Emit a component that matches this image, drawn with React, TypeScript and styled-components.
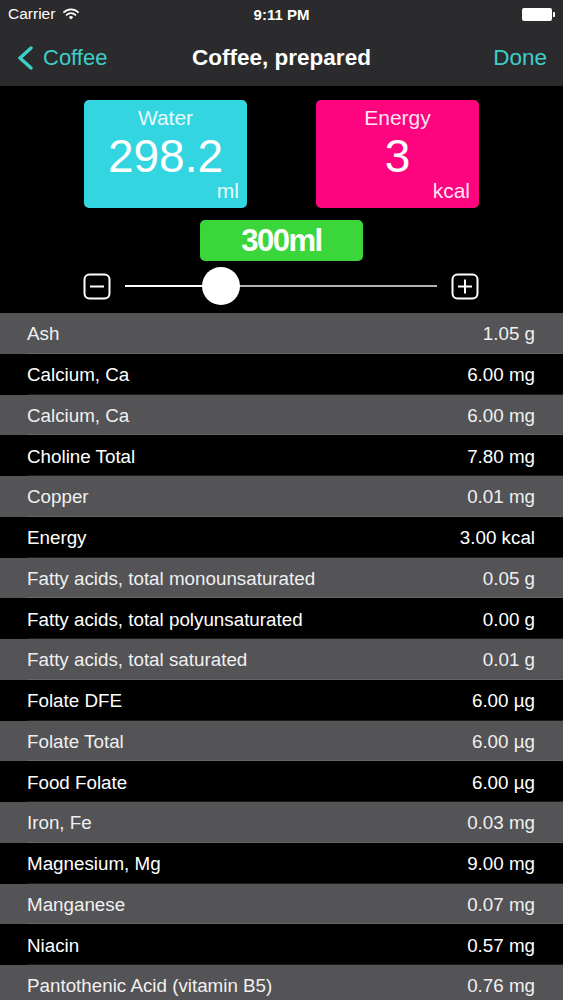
import React from "react";
import styled, { createGlobalStyle } from "styled-components";

const GlobalStyle = createGlobalStyle`
  html, body {
    margin: 0;
    padding: 0;
    background: #000;
  }
  body {
    font-family: "Liberation Sans", Arial, sans-serif;
    color: #fff;
  }
`;

const Screen = styled.div`
  width: 563px;
  height: 1000px;
  overflow: hidden;
  background: #000;
`;

const Header = styled.header`
  background: #2b2a2c;
  height: 86px;
  display: flex;
  flex-direction: column;
`;

const StatusBar = styled.div`
  height: 28px;
  display: grid;
  grid-template-columns: 1fr auto 1fr;
  align-items: center;
  padding: 0 8px;
  font-size: 15.5px;
`;

const Carrier = styled.div`
  display: flex;
  align-items: center;
  gap: 8px;
`;

const Time = styled.div`
  font-weight: bold;
  font-size: 15px;
`;

const Battery = styled.div`
  justify-self: end;
  display: flex;
  align-items: center;
`;

const BatteryBody = styled.div`
  width: 30px;
  height: 13px;
  background: #fff;
  border-radius: 2px;
`;

const BatteryNub = styled.div`
  width: 2px;
  height: 5px;
  margin-left: 1px;
  background: #fff;
  border-radius: 0 1px 1px 0;
`;

const NavBar = styled.nav`
  flex: 1;
  display: grid;
  grid-template-columns: 1fr auto 1fr;
  align-items: center;
  padding: 2px 16px 0 16px;
`;

const BackButton = styled.div`
  display: flex;
  align-items: center;
  gap: 9px;
  color: #3ccfc8;
  font-size: 22px;
`;

const Title = styled.div`
  font-size: 22.5px;
  font-weight: bold;
`;

const DoneButton = styled.div`
  justify-self: end;
  color: #3ccfc8;
  font-size: 22.5px;
`;

const Summary = styled.section`
  padding: 14px 0 8px;
  display: flex;
  flex-direction: column;
  align-items: center;
`;

const Cards = styled.div`
  display: flex;
  gap: 69px;
`;

const Card = styled.div<{ $bg: string; $unitPad: number }>`
  width: 163px;
  height: 108px;
  box-sizing: border-box;
  padding: 6px ${(p) => p.$unitPad}px 6px;
  border-radius: 5px;
  background: ${(p) => p.$bg};
  display: flex;
  flex-direction: column;
`;

const CardLabel = styled.div`
  height: 24px;
  line-height: 24px;
  text-align: center;
  font-size: 21px;
  color: rgba(255, 255, 255, 0.92);
`;

const CardValue = styled.div`
  height: 50px;
  line-height: 52px;
  text-align: center;
  font-size: 46px;
`;

const CardUnit = styled.div`
  height: 22px;
  line-height: 22px;
  text-align: right;
  font-size: 21px;
  color: rgba(255, 255, 255, 0.92);
`;

const Amount = styled.div`
  margin-top: 12px;
  width: 163px;
  height: 41px;
  border-radius: 5px;
  background: #3bd639;
  display: flex;
  align-items: center;
  justify-content: center;
  font-size: 31px;
  font-weight: bold;
  letter-spacing: -1.5px;
`;

const SliderRow = styled.div`
  margin-top: 6px;
  width: 100%;
  box-sizing: border-box;
  height: 38px;
  padding: 0 84px 0 83px;
  display: flex;
  align-items: center;
  gap: 14px;
`;

const Track = styled.div`
  position: relative;
  flex: 1;
  height: 2px;
  background: #b1b1b1;
`;

const TrackFill = styled.div`
  height: 100%;
  background: #fff;
`;

const Thumb = styled.div`
  position: absolute;
  top: 50%;
  width: 38px;
  height: 38px;
  border-radius: 50%;
  background: #fff;
  transform: translate(-50%, -50%);
`;

const List = styled.div`
  display: flex;
  flex-direction: column;
`;

const Row = styled.div<{ $shade: boolean }>`
  position: relative;
  height: 40.75px;
  box-sizing: border-box;
  flex-shrink: 0;
  display: flex;
  align-items: center;
  justify-content: space-between;
  padding: 2px 28px 0 27px;
  font-size: 18.8px;
  background: ${(p) => (p.$shade ? "#545356" : "#000")};
  color: ${(p) => (p.$shade ? "#f0f0f0" : "#fff")};

  &::after {
    content: "";
    position: absolute;
    left: 27px;
    right: 0;
    bottom: 0;
    height: 1px;
    background: rgba(255, 255, 255, 0.1);
  }
`;

const WifiIcon = () => (
  <svg width="16" height="12" viewBox="0 0 16 12">
    <path d="M1 4.2 A10 10 0 0 1 15 4.2" stroke="#fff" strokeWidth="1.8" fill="none" strokeLinecap="round" />
    <path d="M3.6 6.8 A6.4 6.4 0 0 1 12.4 6.8" stroke="#fff" strokeWidth="1.8" fill="none" strokeLinecap="round" />
    <path d="M8 11.5 L5.8 9.2 A3.1 3.1 0 0 1 10.2 9.2 Z" fill="#fff" />
  </svg>
);

const Chevron = () => (
  <svg width="18" height="24" viewBox="0 0 18 24">
    <path d="M15 2 L4 12 L15 22" stroke="#3ccfc8" strokeWidth="3.4" fill="none" strokeLinecap="round" strokeLinejoin="round" />
  </svg>
);

const StepIcon = ({ plus }: { plus?: boolean }) => (
  <svg width="28" height="27" viewBox="0 0 28 27">
    <rect x="1.5" y="1.5" width="25" height="24" rx="5" stroke="#fff" strokeWidth="2" fill="none" />
    <path d="M7 13.5 H21" stroke="#fff" strokeWidth="2" />
    {plus && <path d="M14 6.5 V20.5" stroke="#fff" strokeWidth="2" />}
  </svg>
);

const nutrients: [string, string][] = [
  ["Ash", "1.05 g"],
  ["Calcium, Ca", "6.00 mg"],
  ["Calcium, Ca", "6.00 mg"],
  ["Choline Total", "7.80 mg"],
  ["Copper", "0.01 mg"],
  ["Energy", "3.00 kcal"],
  ["Fatty acids, total monounsaturated", "0.05 g"],
  ["Fatty acids, total polyunsaturated", "0.00 g"],
  ["Fatty acids, total saturated", "0.01 g"],
  ["Folate DFE", "6.00 µg"],
  ["Folate Total", "6.00 µg"],
  ["Food Folate", "6.00 µg"],
  ["Iron, Fe", "0.03 mg"],
  ["Magnesium, Mg", "9.00 mg"],
  ["Manganese", "0.07 mg"],
  ["Niacin", "0.57 mg"],
  ["Pantothenic Acid (vitamin B5)", "0.76 mg"],
];

const sliderValue = 0.307;

const App: React.FC = () => {
  return (
    <Screen>
      <GlobalStyle />
      <Header>
        <StatusBar>
          <Carrier>
            Carrier
            <WifiIcon />
          </Carrier>
          <Time>9:11 PM</Time>
          <Battery>
            <BatteryBody />
            <BatteryNub />
          </Battery>
        </StatusBar>
        <NavBar>
          <BackButton>
            <Chevron />
            Coffee
          </BackButton>
          <Title>Coffee, prepared</Title>
          <DoneButton>Done</DoneButton>
        </NavBar>
      </Header>

      <Summary>
        <Cards>
          <Card $bg="#33d5e1" $unitPad={8}>
            <CardLabel>Water</CardLabel>
            <CardValue>298.2</CardValue>
            <CardUnit>ml</CardUnit>
          </Card>
          <Card $bg="#fe057f" $unitPad={9}>
            <CardLabel>Energy</CardLabel>
            <CardValue>3</CardValue>
            <CardUnit>kcal</CardUnit>
          </Card>
        </Cards>
        <Amount>300ml</Amount>
        <SliderRow>
          <StepIcon />
          <Track>
            <TrackFill style={{ width: `${sliderValue * 100}%` }} />
            <Thumb style={{ left: `${sliderValue * 100}%` }} />
          </Track>
          <StepIcon plus />
        </SliderRow>
      </Summary>

      <List>
        {nutrients.map(([name, value], i) => (
          <Row key={i} $shade={i % 2 === 0}>
            <span>{name}</span>
            <span>{value}</span>
          </Row>
        ))}
      </List>
    </Screen>
  );
};

export default App;
